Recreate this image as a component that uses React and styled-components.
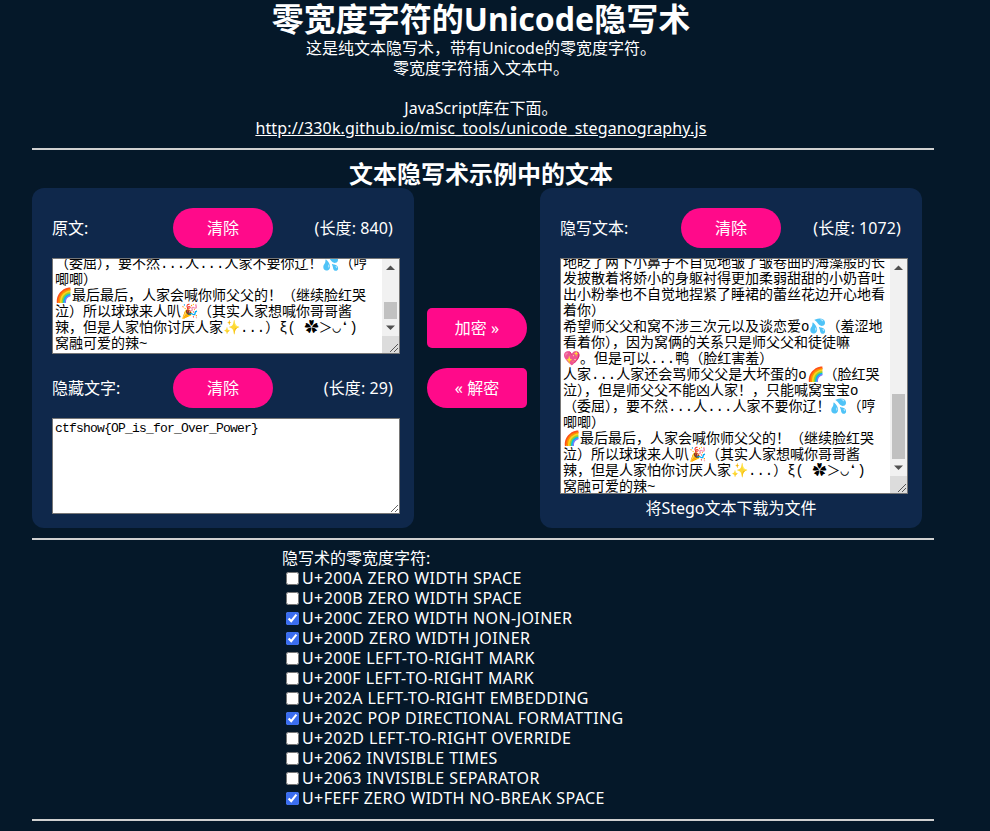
import React, { useEffect, useRef } from "react";
import styled, { createGlobalStyle } from "styled-components";

const Global = createGlobalStyle`
  html, body { margin: 0; padding: 0; }
  body {
    background: #051829;
    color: #fff;
    font-family: "Noto Sans", "Noto Sans CJK SC", sans-serif;
    font-size: 16px;
    line-height: 20px;
  }
`;

const Page = styled.div`
  width: 902px;
  margin-left: 32px;
  text-align: center;
`;
const Title = styled.h1`
  margin: 0;
  padding-right: 4px;
  height: 38px;
  font-size: 32px;
  line-height: 38px;
  font-weight: 700;
`;
const Intro = styled.p`
  margin: 0;
  padding-right: 4px;
  height: 100px;
  white-space: pre-line;
`;
const Link = styled.a`
  color: #fff;
  text-decoration: underline;
  letter-spacing: 0.16px;
`;
const Rule = styled.hr`
  margin: 10px 0 0;
  border: 0;
  height: 2px;
  background: #d0d0d0;
`;
const Subtitle = styled.h2`
  margin: 0;
  padding-right: 4px;
  height: 38px;
  font-size: 24px;
  line-height: 48px;
  font-weight: 700;
`;
const Workspace = styled.div`
  display: grid;
  grid-template-columns: 382px 126px 382px;
  width: 890px;
  height: 340px;
`;
const Panel = styled.section`
  background: #0f284b;
  border-radius: 12px;
  padding: 20px;
  box-sizing: border-box;
  height: 340px;
`;
const PanelHead = styled.div`
  display: grid;
  grid-template-columns: 121px 100px 1fr;
  align-items: center;
  height: 40px;
  margin-bottom: 10px;
  &:not(:first-child) { margin-top: 14px; }
`;
const Label = styled.span`
  text-align: left;
`;
const Count = styled.span`
  text-align: right;
  padding-right: 1px;
  letter-spacing: 0.1px;
`;
const Action = styled.button`
  width: 100px;
  height: 40px;
  padding: 0;
  border: 0;
  border-radius: ${(p) => p.$radius || "20px"};
  background: #ff0a8a;
  color: #fff;
  font: inherit;
  text-align: center;
`;
const Middle = styled.div`
  display: flex;
  flex-direction: column;
  align-items: center;
  gap: 20px;
  padding-top: 120px;
`;
const AreaWrap = styled.div`
  position: relative;
  width: 348px;
`;
const Area = styled.textarea`
  display: block;
  box-sizing: border-box;
  width: 348px;
  height: ${(p) => p.$h}px;
  margin: 0;
  padding: 2px 19px 2px 2px;
  border: 1px solid #767676;
  background: #fff;
  color: #000;
  font-family: "Liberation Mono", "Noto Sans CJK SC", monospace;
  font-size: 14px;
  line-height: 16px;
  white-space: pre;
  overflow: hidden;
  resize: none;
  outline: none;
`;
const PlainArea = styled(Area)`
  padding: 2px;
  font-size: 13px;
  letter-spacing: -0.8px;
  resize: both;
`;
const Rail = styled.div`
  position: absolute;
  top: 1px;
  right: 1px;
  bottom: 1px;
  width: 17px;
  display: flex;
  flex-direction: column;
  background: #f1f1f1;
`;
const RailButton = styled.svg`
  display: block;
  flex: none;
  width: 17px;
  height: 17px;
`;
const RailTrack = styled.div`
  flex: 1;
  display: flex;
  flex-direction: column;
  justify-content: flex-end;
`;
const RailThumb = styled.div`
  height: ${(p) => p.$h}px;
  margin: 0 2px;
  background: #c1c1c1;
`;
const RailCorner = styled.svg`
  display: block;
  flex: none;
  width: 17px;
  height: 17px;
  background: #dcdcdc;
`;
const Download = styled.div`
  color: #fff;
  margin-top: 4px;
  text-align: center;
`;
const Options = styled.fieldset`
  width: 402px;
  margin: 0 auto;
  padding: 8px 0 1px;
  border: 0;
  text-align: left;
  box-sizing: content-box;
`;
const OptionsTitle = styled.div`
  height: 20px;
`;
const Option = styled.label`
  display: flex;
  align-items: center;
  height: 20px;
  letter-spacing: 0.41px;
`;
const Check = styled.input`
  width: 13px;
  height: 13px;
  margin: 3px 3px 3px 4px;
  accent-color: #3b6ef0;
`;

const tail = `（委屈），要不然...人...人家不要你辽！💦（哼
唧唧）
🌈最后最后，人家会喊你师父父的！（继续脸红哭
泣）所以球球来人叭🎉（其实人家想喊你哥哥酱
辣，但是人家怕你讨厌人家✨...）ξ( ✿＞◡❛)
窝融可爱的辣~`;
const stego = `地眨了两下小鼻子不自觉地皱了皱卷曲的海藻般的长
发披散着将娇小的身躯衬得更加柔弱甜甜的小奶音吐
出小粉拳也不自觉地捏紧了睡裙的蕾丝花边开心地看
着你）
希望师父父和窝不涉三次元以及谈恋爱o💦（羞涩地
看着你），因为窝俩的关系只是师父父和徒徒嘛
💖。但是可以...鸭（脸红害羞）
人家...人家还会骂师父父是大坏蛋的o🌈（脸红哭
泣），但是师父父不能凶人家！，只能喊窝宝宝o
${tail}`;
const earlier = "师父父今天也要开心鸭\n".repeat(27);

const options = [
  ["U+200A ZERO WIDTH SPACE", false],
  ["U+200B ZERO WIDTH SPACE", false],
  ["U+200C ZERO WIDTH NON-JOINER", true],
  ["U+200D ZERO WIDTH JOINER", true],
  ["U+200E LEFT-TO-RIGHT MARK", false],
  ["U+200F LEFT-TO-RIGHT MARK", false],
  ["U+202A LEFT-TO-RIGHT EMBEDDING", false],
  ["U+202C POP DIRECTIONAL FORMATTING", true],
  ["U+202D LEFT-TO-RIGHT OVERRIDE", false],
  ["U+2062 INVISIBLE TIMES", false],
  ["U+2063 INVISIBLE SEPARATOR", false],
  ["U+FEFF ZERO WIDTH NO-BREAK SPACE", true],
];

function Scrolled({ value, h, thumb, offset }) {
  const ref = useRef(null);
  useEffect(() => {
    const el = ref.current;
    el.scrollTop = el.scrollHeight - el.clientHeight - offset;
  }, [offset]);
  return (
    <AreaWrap>
      <Area ref={ref} $h={h} defaultValue={value} />
      <Rail>
        <RailButton viewBox="0 0 17 17">
          <path d="M4 11h9L8.5 6.5z" fill="#505050" />
        </RailButton>
        <RailTrack>
          <RailThumb $h={thumb} />
        </RailTrack>
        <RailButton viewBox="0 0 17 17">
          <path d="M4 6.5h9L8.5 11z" fill="#505050" />
        </RailButton>
        <RailCorner viewBox="0 0 17 17">
          <path d="M8 16L16 8M12 16L16 12" stroke="#555" fill="none" />
        </RailCorner>
      </Rail>
    </AreaWrap>
  );
}

export default function App() {
  return (
    <Page>
      <Global />
      <Title>零宽度字符的Unicode隐写术</Title>
      <Intro>
        {"这是纯文本隐写术，带有Unicode的零宽度字符。\n零宽度字符插入文本中。\n\nJavaScript库在下面。\n"}
        <Link href="#">http://330k.github.io/misc_tools/unicode_steganography.js</Link>
      </Intro>
      <Rule />
      <Subtitle>文本隐写术示例中的文本</Subtitle>
      <Workspace>
        <Panel>
          <PanelHead>
            <Label>原文:</Label>
            <Action>清除</Action>
            <Count>(长度: 840)</Count>
          </PanelHead>
          <Scrolled h={96} thumb={17} offset={1} value={earlier + tail} />
          <PanelHead>
            <Label>隐藏文字:</Label>
            <Action>清除</Action>
            <Count>(长度: 29)</Count>
          </PanelHead>
          <PlainArea $h={96} defaultValue="ctfshow{OP_is_for_Over_Power}" />
        </Panel>
        <Middle>
          <Action $radius="5px 20px 20px 5px">加密 »</Action>
          <Action $radius="20px 5px 5px 20px">« 解密</Action>
        </Middle>
        <Panel>
          <PanelHead>
            <Label>隐写文本:</Label>
            <Action>清除</Action>
            <Count>(长度: 1072)</Count>
          </PanelHead>
          <Scrolled h={236} thumb={65} offset={4} value={earlier + stego} />
          <Download>将Stego文本下载为文件</Download>
        </Panel>
      </Workspace>
      <Rule />
      <Options>
        <OptionsTitle>隐写术的零宽度字符:</OptionsTitle>
        {options.map(([text, on]) => (
          <Option key={text}>
            <Check type="checkbox" defaultChecked={on} />
            {text}
          </Option>
        ))}
      </Options>
      <Rule />
    </Page>
  );
}
